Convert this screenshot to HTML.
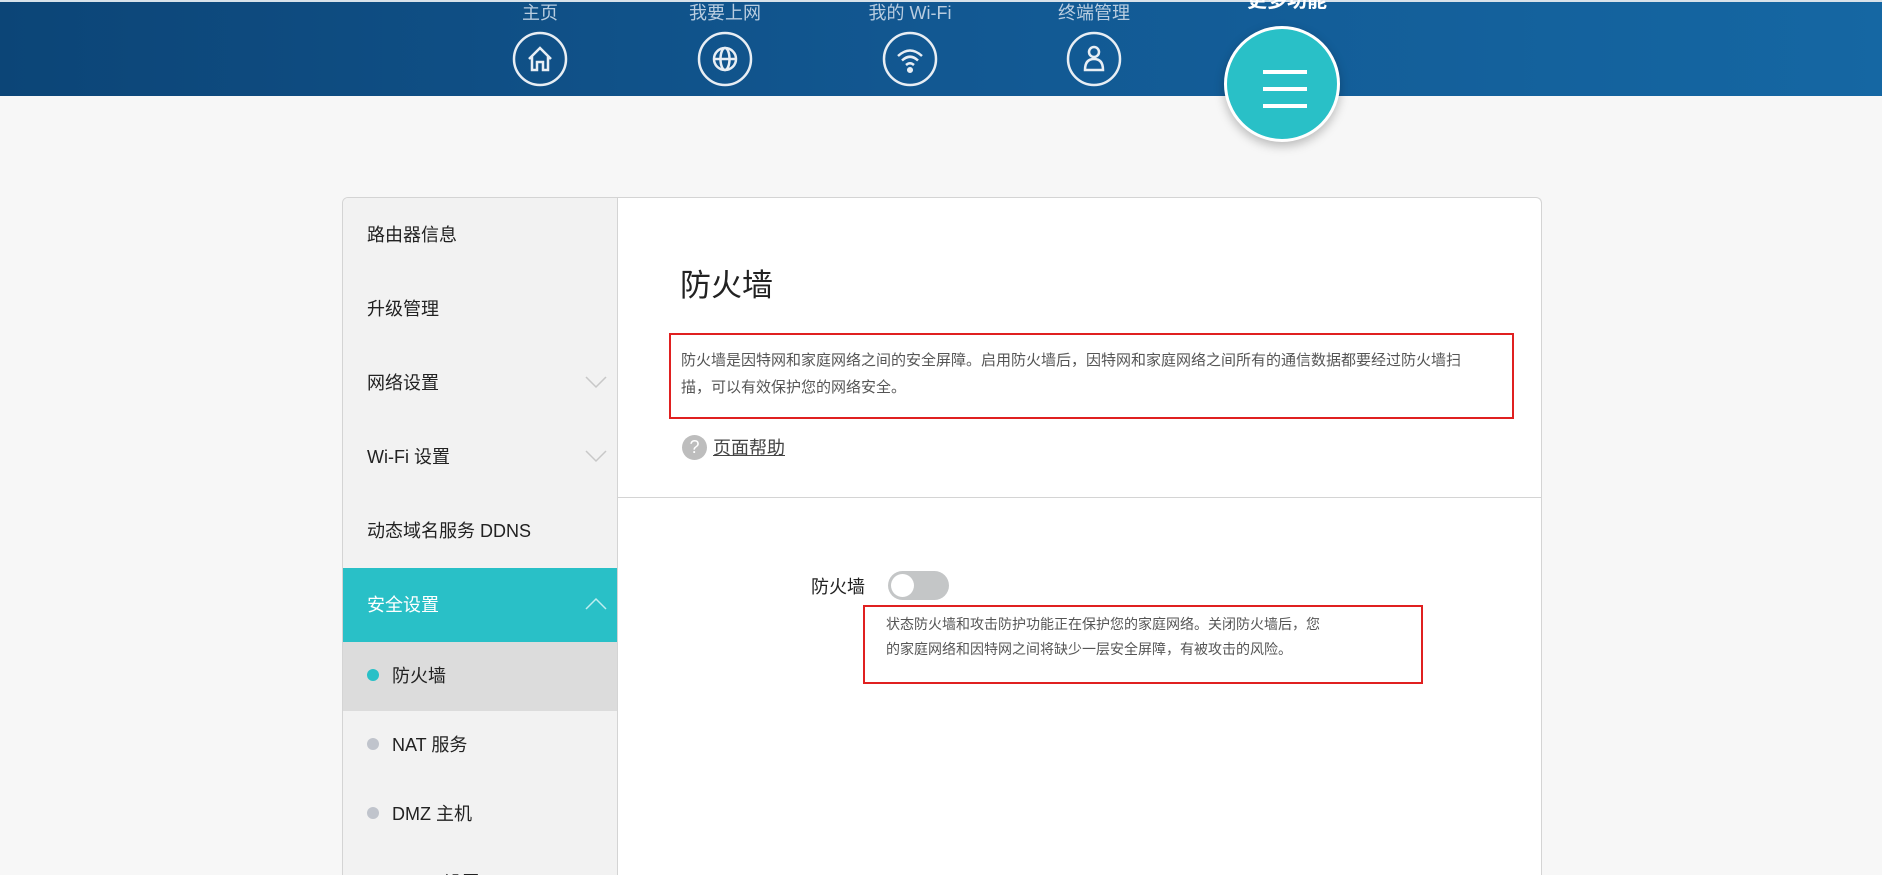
<!DOCTYPE html>
<html><head><meta charset="utf-8">
<style>
*{margin:0;padding:0;box-sizing:border-box}
html{width:1882px;height:875px;overflow:hidden}
body{width:1882px;height:875px;overflow:hidden;background:#f7f7f7;font-family:"Liberation Sans","Noto Sans CJK SC",sans-serif;position:relative;color:#333}
.hdr{position:absolute;left:0;top:0;width:1882px;height:96px;background:linear-gradient(90deg,#0c4577 0%,#125892 50%,#1567a3 100%);border-top:2px solid #d8e2ea}
.nav{position:absolute;top:0;width:120px;margin-left:-60px;text-align:center;color:#b9cde0;font-size:18px}
.nav .l{position:absolute;top:1px;left:0;width:120px;line-height:24px}
.nav svg{position:absolute;top:31px;left:32px}
.big{position:absolute;left:1224px;top:26px;width:116px;height:116px;border-radius:50%;background:#29c0c7;border:3px solid #fff;box-shadow:0 4px 10px rgba(0,0,0,.25)}
.big i{position:absolute;left:36px;width:44px;height:4px;background:#fff}
.bigl{position:absolute;left:1232px;top:-16px;width:110px;text-align:center;color:#fff;font-weight:bold;font-size:20px}
.panel{position:absolute;left:342px;top:197px;width:1200px;height:678px;border:1px solid #d4d4d4;border-bottom:none;border-radius:6px 6px 0 0;background:#fff;overflow:hidden}
.side{position:absolute;left:0;top:0;width:275px;height:100%;background:#f2f2f2;border-right:1px solid #d4d4d4}
.it{position:absolute;left:0;width:274px;font-size:18px;color:#222;padding-left:24px}
.chev{position:absolute;right:10px;top:50%;margin-top:-8px}
.dot{display:inline-block;width:12px;height:12px;border-radius:50%;background:#c0c4cc;margin-right:13px;vertical-align:1px}
.title{position:absolute;left:337px;top:62px;font-size:31px;color:#222}
.box1{position:absolute;left:326px;top:135px;width:845px;height:86px;border:2px solid #e02020}
.box1 p{position:absolute;left:10px;top:12px;width:812px;font-size:15px;line-height:27px;color:#555}
.help{position:absolute;left:340px;top:236px;font-size:18px;color:#444;text-decoration:underline}
.hq{position:absolute;left:339px;top:237px;width:25px;height:25px;border-radius:50%;background:#bdbdbd;color:#fff;font-size:18px;text-align:center;line-height:25px}
.div{position:absolute;left:275px;top:299px;width:930px;height:1px;background:#d4d4d4}
.tl{position:absolute;left:468px;top:375px;font-size:18px;color:#222}
.tog{position:absolute;left:545px;top:373px;width:61px;height:29px;border-radius:15px;background:#c4c6c7}
.tog i{position:absolute;left:3px;top:3px;width:23px;height:23px;border-radius:50%;background:#fff}
.box2{position:absolute;left:520px;top:407px;width:560px;height:79px;border:2px solid #e02020}
.box2 p{position:absolute;left:21px;top:5px;width:520px;font-size:14px;line-height:25px;color:#555}
</style></head><body>
<div class="hdr"></div>
<div class="nav" style="left:540px"><div class="l">主页</div><svg width="56" height="56" viewBox="0 0 56 56" fill="none" stroke="#e8eef4" stroke-width="2.5"><circle cx="28" cy="28" r="26"/><path d="M17 28 L28 17 L39 28 M20 25 V39 H25 V31 H31 V39 H36 V25"/></svg></div>
<div class="nav" style="left:725px"><div class="l">我要上网</div><svg width="56" height="56" viewBox="0 0 56 56" fill="none" stroke="#e8eef4" stroke-width="2.5"><circle cx="28" cy="28" r="26"/><circle cx="28" cy="28" r="11"/><ellipse cx="28" cy="28" rx="4.5" ry="11"/><path d="M17 28H39"/></svg></div>
<div class="nav" style="left:910px"><div class="l">我的 Wi-Fi</div><svg width="56" height="56" viewBox="0 0 56 56" fill="none" stroke="#e8eef4" stroke-width="2.5"><circle cx="28" cy="28" r="26"/><path d="M16 25 Q28 14 40 25 M20 29.5 Q28 22 36 29.5 M24 34 Q28 30.5 32 34"/><circle cx="28" cy="39" r="1.8" fill="#e8eef4"/></svg></div>
<div class="nav" style="left:1094px"><div class="l">终端管理</div><svg width="56" height="56" viewBox="0 0 56 56" fill="none" stroke="#e8eef4" stroke-width="2.5"><circle cx="28" cy="28" r="26"/><circle cx="28" cy="21" r="5"/><path d="M19 39 Q19 28 28 28 Q37 28 37 39 Z"/></svg></div>
<div class="bigl">更多功能</div>
<div class="big"><i style="top:41px"></i><i style="top:58px"></i><i style="top:75px"></i></div>

<div class="panel">
<div class="side">
 <div class="it" style="top:0;height:74px;line-height:74px">路由器信息</div>
 <div class="it" style="top:74px;height:74px;line-height:74px">升级管理</div>
 <div class="it" style="top:148px;height:74px;line-height:74px">网络设置<svg class="chev" width="22" height="14" viewBox="0 0 22 14"><path d="M1 2 L11 12 L21 2" fill="none" stroke="#c8c8c8" stroke-width="1.5"/></svg></div>
 <div class="it" style="top:222px;height:74px;line-height:74px">Wi-Fi 设置<svg class="chev" width="22" height="14" viewBox="0 0 22 14"><path d="M1 2 L11 12 L21 2" fill="none" stroke="#c8c8c8" stroke-width="1.5"/></svg></div>
 <div class="it" style="top:296px;height:74px;line-height:74px">动态域名服务 DDNS</div>
 <div class="it" style="top:370px;height:74px;line-height:74px;background:#29c0c7;color:#fff">安全设置<svg class="chev" width="22" height="14" viewBox="0 0 22 14"><path d="M1 12 L11 2 L21 12" fill="none" stroke="#bfeef0" stroke-width="1.5"/></svg></div>
 <div class="it" style="top:444px;height:69px;line-height:69px;background:#dcdcdc"><span class="dot" style="background:#29c0c7"></span>防火墙</div>
 <div class="it" style="top:513px;height:69px;line-height:69px"><span class="dot"></span>NAT 服务</div>
 <div class="it" style="top:582px;height:69px;line-height:69px"><span class="dot"></span>DMZ 主机</div>
 <div class="it" style="top:651px;height:69px;line-height:69px"><span class="dot"></span>UPnP 设置</div>
</div>
<div class="title">防火墙</div>
<div class="box1"><p>防火墙是因特网和家庭网络之间的安全屏障。启用防火墙后，因特网和家庭网络之间所有的通信数据都要经过防火墙扫<br>描，可以有效保护您的网络安全。</p></div>
<div class="hq">?</div><div class="help" style="left:370px">页面帮助</div>
<div class="div"></div>
<div class="tl">防火墙</div>
<div class="tog"><i></i></div>
<div class="box2"><p>状态防火墙和攻击防护功能正在保护您的家庭网络。关闭防火墙后，您<br>的家庭网络和因特网之间将缺少一层安全屏障，有被攻击的风险。</p></div>
</div>
</body></html>
